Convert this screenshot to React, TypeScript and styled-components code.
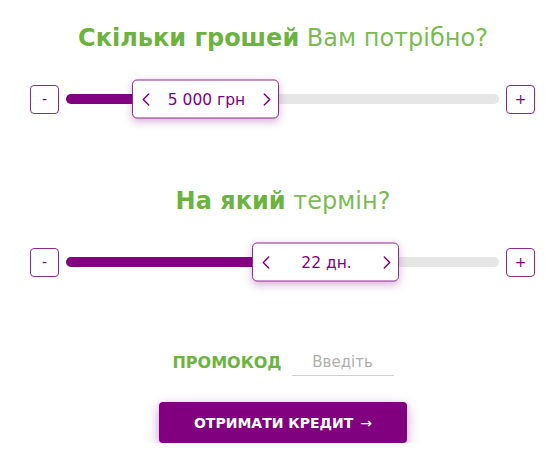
import React from 'react';
import styled, { createGlobalStyle } from 'styled-components';
import { ChevronLeft, ChevronRight } from 'lucide-react';

const GlobalStyle = createGlobalStyle`
  html, body {
    margin: 0;
    padding: 0;
    background: #ffffff;
  }
  body {
    font-family: "DejaVu Sans", "Noto Sans", sans-serif;
  }
`;

const PURPLE = '#800080';
const GREEN = '#6cb33f';

const Calculator = styled.div`
  width: 560px;
  display: flex;
  flex-direction: column;
  align-items: stretch;
  padding: 23px 0 0 6px;
  box-sizing: border-box;
`;

const Title = styled.h2<{ $gap: number }>`
  margin: ${(p) => p.$gap}px 0 0;
  text-align: center;
  font-size: 24px;
  line-height: 30px;
  font-weight: 400;
  color: #7cbb54;

  b {
    font-weight: 700;
    color: ${GREEN};
  }
`;

const SliderRow = styled.div<{ $gap: number }>`
  display: flex;
  align-items: center;
  height: 40px;
  margin-top: ${(p) => p.$gap}px;
  padding: 0 25px 0 24px;
`;

const StepButton = styled.button`
  width: 29px;
  height: 29px;
  flex: none;
  padding: 0;
  background: #fff;
  border: 1px solid #8e2a8e;
  border-radius: 4px;
  color: ${PURPLE};
  font-family: inherit;
  font-size: 14px;
  line-height: 1;
  cursor: pointer;
`;

const Track = styled.div`
  position: relative;
  flex: 1;
  height: 10px;
  margin: 0 7px;
  background: #e6e6e6;
  border-radius: 5px;
`;

const Fill = styled.div`
  height: 100%;
  background: ${PURPLE};
  border-radius: 5px;
`;

const Thumb = styled.div`
  position: absolute;
  top: 50%;
  transform: translateY(-50%);
  width: 147px;
  height: 39px;
  box-sizing: border-box;
  display: flex;
  align-items: center;
  justify-content: space-between;
  padding: 0 0 0 2px;
  background: #fff;
  border: 1px solid #8e2a8e;
  border-radius: 5px;
  box-shadow: 0 3px 8px rgba(128, 0, 128, 0.3);
  color: ${PURPLE};
  font-size: 15.5px;

  svg {
    flex: none;
  }
`;

const ThumbValue = styled.span`
  flex: 1;
  text-align: center;
`;

const PromoRow = styled.div`
  display: flex;
  justify-content: center;
  align-items: center;
  gap: 10px;
  margin-top: 66px;
  height: 28px;
`;

const PromoLabel = styled.span`
  color: ${GREEN};
  font-weight: 700;
  font-size: 16px;
`;

const PromoInput = styled.input`
  width: 102px;
  height: 28px;
  box-sizing: border-box;
  border: none;
  border-bottom: 1px solid #d0d0d0;
  outline: none;
  text-align: center;
  font-family: inherit;
  font-size: 15px;
  color: #555;
  background: transparent;

  &::placeholder {
    color: #b0b0b0;
  }
`;

const SubmitButton = styled.button`
  align-self: center;
  margin-top: 26px;
  width: 248px;
  height: 41px;
  background: ${PURPLE};
  border: none;
  border-radius: 4px;
  color: #fff;
  font-family: inherit;
  font-weight: 700;
  font-size: 14px;
  box-shadow: 0 4px 12px rgba(128, 0, 128, 0.4);
  cursor: pointer;
`;

const Arrow = styled.span`
  margin-left: 7px;
  font-weight: 400;
`;

type SliderProps = {
  gap: number;
  fill: number;
  thumbLeft: number;
  value: string;
};

const Slider: React.FC<SliderProps> = ({ gap, fill, thumbLeft, value }) => (
  <SliderRow $gap={gap}>
    <StepButton>-</StepButton>
    <Track>
      <Fill style={{ width: `${fill}px` }} />
      <Thumb style={{ left: `${thumbLeft}px` }}>
        <ChevronLeft size={22} strokeWidth={1.6} />
        <ThumbValue>{value}</ThumbValue>
        <ChevronRight size={22} strokeWidth={1.6} />
      </Thumb>
    </Track>
    <StepButton>+</StepButton>
  </SliderRow>
);

const App: React.FC = () => (
  <>
    <GlobalStyle />
    <Calculator>
      <Title $gap={0}>
        <b>Скільки грошей</b> Вам потрібно?
      </Title>
      <Slider gap={26} fill={72} thumbLeft={66} value="5 000 грн" />

      <Title $gap={67}>
        <b>На який</b> термін?
      </Title>
      <Slider gap={26} fill={192} thumbLeft={186} value="22 дн." />

      <PromoRow>
        <PromoLabel>ПРОМОКОД</PromoLabel>
        <PromoInput placeholder="Введіть" />
      </PromoRow>

      <SubmitButton>
        ОТРИМАТИ КРЕДИТ<Arrow>→</Arrow>
      </SubmitButton>
    </Calculator>
  </>
);

export default App;
